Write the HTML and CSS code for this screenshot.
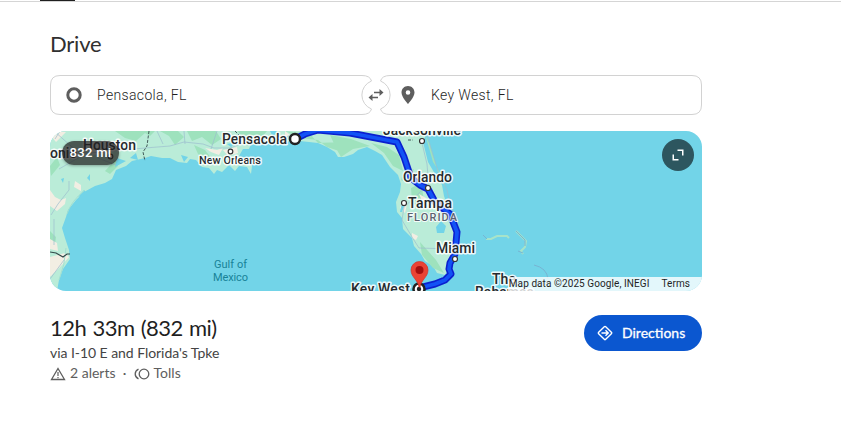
FILE: index.html
```
<!doctype html>
<html lang="en">
<head>
<meta charset="UTF-8">
<title>Drive</title>
<link rel="stylesheet" href="styles.css">
</head>
<body>
	<div class="tabs"><span class="tab-active"></span></div>
	<div class="content">
		<h2>Drive</h2>
		<div class="fields">
			<svg class="outline" width="652" height="42" viewBox="0 0 652 42">
				<path d="M316 7Q314 1.500 308.500 1.500H10Q.5 1.500 .5 11V31Q.5 40.500 10 40.500H308.500Q320 40.500 321.500 35"/>
				<path class="clear" d="M308 0H345V42H308Z"/>
				<path d="M308 1.500H312Q320 1.500 321.500 7A15 15 0 0 0 321.500 35Q320 40.500 312 40.500H308M345 1.500H340Q332 1.500 330.500 7A15 15 0 0 1 330.500 35Q332 40.500 340 40.500H345"/>
				<path d="M344 1.500H642Q651.500 1.500 651.500 11V31Q651.500 40.500 642 40.500H344"/>
			</svg>
			<div class="field from">
				<svg width="18" height="18"><circle cx="9" cy="9" r="6.200" fill="none" stroke="#5e5e5e" stroke-width="3"/></svg>
				<span>Pensacola, FL</span>
			</div>
			<svg class="swap" width="16" height="14" viewBox="0 0 16 14"><path d="M6 4.500H12M10 9.500H4" stroke="#5e5e5e" stroke-width="1.600"/><path d="M11.500 1L15.500 4.500L11.500 8ZM4.500 6L.5 9.500L4.500 13Z" fill="#5e5e5e"/></svg>
			<div class="field to">
				<svg width="14" height="18" viewBox="0 0 14 18"><path fill="#5e5e5e" fill-rule="evenodd" d="M7 0C3.200 0 .5 2.900.5 6.500C.5 11.200 7 18 7 18S13.500 11.200 13.500 6.500C13.500 2.900 10.800 0 7 0ZM7 4.200A2.300 2.300 0 1 1 7 8.800A2.300 2.300 0 1 1 7 4.200Z"/></svg>
				<span>Key West, FL</span>
			</div>
		</div>

		<div class="map">
			<svg class="canvas" width="652" height="160" viewBox="50 131 652 160">
				<rect x="50" y="131" width="652" height="160" fill="#72d4e8"/>
				<!-- land -->
				<path class="land" d="M50 131H427L425 137L423 142L425 150L428 162L435 174L442 185L444 196L447 205L452 215L456 225L457 235L455 248L452 258L449 268L445 275L437 273L433 266L425 261L421 254L414 246L412 238L403 229L402 218L397 212L396 202L400 192L401 184L398 175L390 167L382 155L375 151L367 147L358 150L353 154L344 157L338 157L335 152L327 147L318 143L300 141L282 142L272 145L265 140L259 144L252 142L249 149L243 149L239 156L248 159L252 166L251 174L247 167L239 166L235 171L229 165L222 172L217 170L214 174L209 168L202 167L196 160L190 159L187 163L178 162L170 158L162 158L151 156L145 158L132 161L126 166L116 170L112 179L105 183L95 186L84 192L76 200L68 210L66 217L62 228L65 238L69 250L70 259L63 269L59 280L57 291H50Z"/>
				<g class="forest">
					<path d="M115 131H155L150 136L145 133L136 141L125 138ZM160 131L169 136L175 145L184 137L178 131ZM187 131H216L221 139L212 145L202 137L192 141ZM194 145L205 150L215 163L206 160L198 154ZM238 131H267L262 137L252 135L248 146L242 139ZM285 131L310 134L318 143L341 142L339 151L327 147L318 140L300 138ZM330 135L351 139L370 146L353 149L341 157L337 150ZM371 143L387 147L399 155L403 171L393 166L384 153ZM403 173L414 169L408 184L401 180ZM411 188L421 183L424 200L419 210L412 201ZM420 242L436 260L444 273L433 268L422 255ZM50 231L56 237L55 245L50 247ZM50 166L57 157L60 165L51 176ZM105 171L115 160L118 166L110 174ZM425 134L430 145L438 172L445 187L443 177L433 162Z"/>
				</g>
				<g class="city">
					<path d="M50 190L55 197L61 200L66 198L65 204L57 211L50 206ZM50 239L57 243L58 251L50 249ZM50 257L65 253L69 257L61 266L50 277ZM75 181L81 185L81 191L74 187ZM51 136L59 131L66 132L56 142ZM92 143L108 145L108 153L92 155ZM205 148L217 150L223 148L219 155L211 152ZM223 150L237 147L238 153L228 156ZM402 202L407 204L405 213L400 208ZM412 233L418 236L416 240L412 238ZM419 194L426 198L423 203ZM285 131L290 135L285 137Z"/>
				</g>
				<g class="lakes">
					<path d="M436 227L441 221L446 226L444 233L437 233ZM61 179L64 178L63 183ZM117 158L126 161L115 167ZM78 197L84 190L87 194ZM205 155L210 159L209 164ZM227 144L236 142L231 147ZM181 155L188 157L184 162ZM400 212L402 203L405 204L402 212ZM87 178L90 174L90 181ZM270 131L273 137L277 131ZM423 187L427 185L427 191ZM130 158L136 153L138 160Z"/>
				</g>
				<g class="roads">
					<path d="M54 131L80 154M69 181L69 190L58 204L51 215M50 154L75 151L90 153L112 151L145 148L170 146L184 142L203 144L214 148L230 148L246 142L266 138L293 136M184 131L185 144M217 131L211 149M157 131L163 144M54 219L54 245M50 279L64 260M59 169L92 150M427 132L430 145L438 171L447 190L450 203L458 222L457 246M429 189L421 191L413 199L404 207L402 220L412 237L419 248L452 249M429 188L427 164L422 143M249 145L260 142M98 158L116 165M60 131L55 139"/>
				</g>
				<path d="M85 190Q71 201 67 214M66 248Q65 265 59 280" fill="none" stroke="#a1dfd1"/>
				<path class="border" d="M50 252L56 253L63 257L67 254H70"/>
				<path class="border dashed" d="M149 131L147 146L143 152L145 161M408 140H413M235 131L239 135"/>
				<!-- Bahamas -->
				<path class="island" d="M486 239L491 239L497 236H507L509 238"/>
				<path class="island" d="M516 231L521 236L526 241L525 247L521 251L523 254"/>
				<path class="reef" d="M483 235L487 239M516 231L525 240L525 246M518 251L523 253M534 265Q547 268 548 279"/>
				<!-- route -->
				<path class="route-edge" d="M295 139L305 134L318 130L350 133L397 142L404 157L411 178L420 185L428 189L435 202L450 214L457 232L455 254L450 263L449 269L451 274L445 280L435 284L419 288"/>
				<path class="route" d="M295 139L305 134L318 130L350 133L397 142L404 157L411 178L420 185L428 189L435 202L450 214L457 232L455 254L450 263L449 269L451 274L445 280L435 284L419 288"/>
				<g class="label">
					<text x="50" y="158">onio</text>
					<text x="83" y="150" textLength="53">Houston</text>
					<text x="222" y="144" textLength="65">Pensacola</text>
					<text x="383" y="135" textLength="78">Jacksonville</text>
					<text x="403" y="182" textLength="49">Orlando</text>
					<text x="408" y="208" textLength="44">Tampa</text>
					<text x="436" y="253" textLength="39">Miami</text>
					<text x="351" y="294" textLength="59">Key West</text>
					<text x="492" y="284">The</text>
					<text x="475" y="297">Bahamas</text>
				</g>
				<text class="town" x="199" y="164" textLength="62">New Orleans</text>
				<text class="state" x="407" y="221" textLength="50">FLORIDA</text>
				<g class="sea"><text x="214" y="268" textLength="33">Gulf of</text><text x="213" y="281" textLength="35">Mexico</text></g>
				<g class="dot"><circle cx="230.500" cy="151.500" r="2.300"/><circle cx="422" cy="141" r="2.500"/><circle cx="428" cy="188" r="2.500"/><circle cx="404" cy="203" r="2.500"/><circle cx="455" cy="259" r="2.500"/><circle cx="110.500" cy="156.500" r="2.300"/></g>
				<g class="stop"><circle cx="295" cy="139" r="5"/><circle cx="419" cy="289" r="5.500"/></g>
				<circle cx="419" cy="289" r="2.200" fill="#222"/>
				<path d="M419 287C418 280 411 277 411 270A8.500 8.500 0 0 1 428 270C428 277 421 280 420 287Z" fill="#ea4335" stroke="#d13429" stroke-width=".7"/>
				<circle cx="419.500" cy="270" r="4" fill="#a50e0e"/>
			</svg>
			<div class="distance">832 mi</div>
			<div class="expand"><svg width="12" height="12" viewBox="0 0 12 12"><path d="M5.500 1.250H10.750V6.500M1.250 5.500V10.750H6.500" fill="none" stroke="#fff" stroke-width="1.500"/></svg></div>
			<div class="credits"><span class="data">Map data ©2025 Google, INEGI</span><span class="terms">Terms</span></div>
		</div>

		<div class="summary">
			<div>
				<div class="time">12h 33m (832 mi)</div>
				<div class="via">via I-10 E and Florida's Tpke</div>
				<div class="notes">
					<svg width="16" height="14" viewBox="0 0 16 14"><path d="M8 1.500L14.500 12.500H1.500Z" fill="none" stroke="#5e5e5e" stroke-width="1.300"/><path d="M8 5V9M8 10V11.300" stroke="#5e5e5e" stroke-width="1.200"/></svg>
					<span class="alerts">2 alerts</span>
					<span class="sep">·</span>
					<svg width="16" height="14" viewBox="0 0 16 14"><circle cx="10" cy="7" r="4.800" fill="none" stroke="#5e5e5e" stroke-width="1.300"/><path d="M4.500 2.200Q1.200 3.700 1.200 7T4.500 11.800" fill="none" stroke="#5e5e5e" stroke-width="1.300"/></svg>
					<span class="tolls">Tolls</span>
				</div>
			</div>
			<div class="directions">
				<svg width="16" height="16" viewBox="0 0 16 16"><rect x="3" y="3" width="10" height="10" rx="1" transform="rotate(45 8 8)" fill="none" stroke="#fff" stroke-width="1.400"/><path d="M4.500 8H11M8.500 5.300L11.200 8L8.500 10.700" fill="none" stroke="#fff" stroke-width="1.400"/></svg>
				<span>Directions</span>
			</div>
		</div>
	</div>
</body>
</html>
```
FILE: styles.css
```
* { box-sizing: border-box }
body {
	margin: 0;
	background: #fff;
	color: #1f1f1f;
	font-family: Roboto, sans-serif;
	overflow: hidden;
}
svg { display: block; flex: none }
.tabs {
	height: 2px;
	padding-left: 40px;
	border-bottom: 1px solid #d5d5d5;
}
.tab-active {
	display: block;
	width: 35px;
	height: 1px;
	background: #1f1f1f;
}
.content {
	width: 652px;
	margin-left: 50px;
}
h2 {
	height: 72px;
	margin: 0;
	padding-top: 27px;
	line-height: 30px;
	color: #303030;
	font-family: Lato, sans-serif;
	font-size: 22px;
	font-weight: 400;
	letter-spacing: -0.2px;
}
.fields {
	position: relative;
	display: flex;
	align-items: center;
	height: 42px;
}
.outline {
	position: absolute;
	left: 0;
	top: 0;
	fill: none;
	stroke: #d2d2d2;
}
.outline .clear {
	fill: #fff;
	stroke: none;
}
.field {
	position: relative;
	display: flex;
	align-items: center;
	font-size: 14px;
	font-weight: 300;
	letter-spacing: 0.35px;
}
.from {
	width: 318px;
	padding-left: 15px;
	gap: 14px;
}
.swap { position: relative }
.to {
	padding-left: 17px;
	gap: 16px;
}
.map {
	position: relative;
	height: 160px;
	margin-top: 15px;
	border-radius: 16px;
	overflow: hidden;
}
.land { fill: #baecd8 }
.forest { fill: #9ee2bd }
.city { fill: #f2eee3 }
.lakes { fill: #72d4e8 }
.roads {
	fill: none;
	stroke: #9dbdcf;
	stroke-width: 1;
	opacity: 0.7;
}
.border {
	fill: none;
	stroke: #34494a;
	stroke-width: 1.2;
}
.dashed {
	stroke-width: 0.9;
	stroke-dasharray: 3 1.5;
}
.island {
	fill: none;
	stroke: #a7e3c9;
	stroke-width: 2;
}
.reef {
	fill: none;
	stroke: #77b4d2;
	stroke-width: 1;
}
.route-edge, .route {
	fill: none;
	stroke: #0b20cf;
	stroke-width: 7;
	stroke-linejoin: round;
}
.route {
	stroke: #1252f5;
	stroke-width: 3.8;
}
.label text, .town, .state {
	fill: #262a2e;
	stroke: rgba(255, 255, 255, 0.85);
	stroke-width: 3px;
	stroke-linejoin: round;
	paint-order: stroke;
	font-size: 14px;
	font-weight: 500;
}
.label .town, .town { font-size: 11px }
.state {
	fill: #5b6270;
	stroke-width: 2px;
	font-size: 11px;
}
.sea {
	fill: #188398;
	font-size: 11px;
}
.dot {
	fill: #fff;
	stroke: #333;
	stroke-width: 1.2;
}
.stop {
	fill: #fff;
	stroke: #222;
	stroke-width: 2.5;
}
.distance {
	position: absolute;
	left: 12px;
	top: 10px;
	width: 57px;
	height: 24px;
	border-radius: 12px;
	background: rgba(31, 31, 31, 0.72);
	box-shadow: 0 1px 3px rgba(0, 0, 0, 0.3);
	color: #fff;
	line-height: 24px;
	text-align: center;
	font-size: 13px;
	font-weight: 500;
	letter-spacing: 0.3px;
}
.expand {
	position: absolute;
	right: 8px;
	top: 8px;
	display: flex;
	align-items: center;
	justify-content: center;
	width: 32px;
	height: 32px;
	border-radius: 50%;
	background: #2d565f;
}
.credits {
	position: absolute;
	right: 0;
	bottom: 0;
	display: flex;
	gap: 12px;
	height: 14px;
	padding: 0 12px 0 1px;
	background: rgba(255, 255, 255, 0.8);
	line-height: 14px;
	font-size: 10px;
	letter-spacing: 0.08px;
}
.summary {
	display: flex;
	justify-content: space-between;
	margin-top: 24px;
	font-family: Lato, sans-serif;
}
.time {
	height: 28px;
	line-height: 26px;
	font-size: 22px;
	letter-spacing: -0.5px;
	word-spacing: 1px;
}
.via {
	height: 20px;
	line-height: 20px;
	font-size: 14px;
	letter-spacing: -0.05px;
	color: #444;
}
.notes {
	display: flex;
	align-items: center;
	height: 22px;
	line-height: 20px;
	font-size: 14px;
	color: #5e5e5e;
}
.notes span { height: 22px }
.alerts { margin-left: 4px }
.sep {
	width: 18px;
	text-align: center;
}
.tolls { margin-left: 4px }
.directions {
	display: flex;
	align-items: center;
	gap: 9px;
	width: 118px;
	height: 36px;
	padding-left: 13px;
	border-radius: 18px;
	background: #0b57d0;
	color: #fff;
	font-size: 14px;
	-webkit-text-stroke: 0.3px #fff;
}
.directions span { padding-bottom: 1px }
```
